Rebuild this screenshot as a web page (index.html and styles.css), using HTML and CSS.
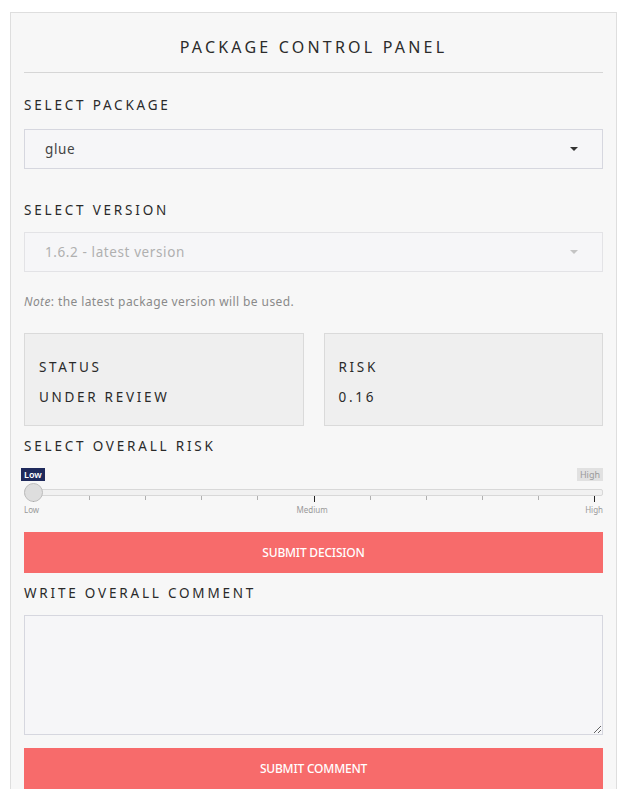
FILE: index.html
```html
<!DOCTYPE html>
<html>
<head>
<meta charset="utf-8">
<link rel="stylesheet" href="styles.css">
</head>
<body>
<div class="panel">
  <h1 class="title">PACKAGE CONTROL PANEL</h1>

  <div class="label first">SELECT PACKAGE</div>
  <div class="select">
    <span>glue</span>
    <span class="caret"></span>
  </div>

  <div class="label version">SELECT VERSION</div>
  <div class="select disabled">
    <span>1.6.2 - latest version</span>
    <span class="caret"></span>
  </div>

  <p class="note"><em>Note</em>: the latest package version will be used.</p>

  <div class="cards">
    <div class="card">
      <div class="card-line">STATUS</div>
      <div class="card-line">UNDER REVIEW</div>
    </div>
    <div class="card">
      <div class="card-line">RISK</div>
      <div class="card-line">0.16</div>
    </div>
  </div>

  <div class="label risk">SELECT OVERALL RISK</div>
  <div class="slider">
    <div class="slider-bubbles">
      <span class="bubble current">Low</span>
      <span class="bubble max">High</span>
    </div>
    <div class="track"></div>
    <div class="ticks">
      <span class="tick major" style="left: calc(9px + 0 * 56.1px)"></span>
      <span class="tick" style="left: calc(9px + 1 * 56.1px)"></span>
      <span class="tick" style="left: calc(9px + 2 * 56.1px)"></span>
      <span class="tick" style="left: calc(9px + 3 * 56.1px)"></span>
      <span class="tick" style="left: calc(9px + 4 * 56.1px)"></span>
      <span class="tick major" style="left: calc(9px + 5 * 56.1px)"></span>
      <span class="tick" style="left: calc(9px + 6 * 56.1px)"></span>
      <span class="tick" style="left: calc(9px + 7 * 56.1px)"></span>
      <span class="tick" style="left: calc(9px + 8 * 56.1px)"></span>
      <span class="tick" style="left: calc(9px + 9 * 56.1px)"></span>
      <span class="tick major" style="left: calc(9px + 10 * 56.1px)"></span>
    </div>
    <span class="thumb"></span>
    <div class="scale">
      <span>Low</span>
      <span>Medium</span>
      <span>High</span>
    </div>
  </div>

  <button class="btn decision">SUBMIT DECISION</button>

  <div class="label comment">WRITE OVERALL COMMENT</div>
  <textarea class="comment-box"></textarea>

  <button class="btn submit-comment">SUBMIT COMMENT</button>
</div>
</body>
</html>
```

FILE: styles.css
```css
html, body {
  margin: 0;
  padding: 0;
  background: #ffffff;
}
body {
  padding: 12px 0 0 10px;
  font-family: "Noto Sans", "Open Sans", sans-serif;
  color: #2b2b2b;
  overflow: hidden;
}
.panel {
  width: 579px;
  padding: 0 13px 40px;
  background: #f7f7f7;
  border: 1px solid #dedede;
  border-bottom: none;
}
.title {
  margin: 0;
  padding: 23px 0 14px;
  font-size: 16px;
  line-height: 22px;
  font-weight: 400;
  letter-spacing: 3.2px;
  text-align: center;
  border-bottom: 1px solid #d6d6d6;
}
.label {
  font-size: 13.5px;
  line-height: 20px;
  letter-spacing: 2.8px;
  color: #2a2a2a;
}
.label.first { margin-top: 22px; }
.label.version { margin-top: 31px; }
.label.risk { margin-top: 10px; }
.label.comment { margin-top: 10px; }

.select {
  margin-top: 14px;
  height: 38px;
  border: 1px solid #d6d7df;
  background: #f6f6f8;
  display: flex;
  align-items: center;
  justify-content: space-between;
  padding: 0 24px 0 20px;
  font-size: 13.5px;
  letter-spacing: 0.6px;
  color: #444;
}
.label.version + .select { margin-top: 12px; }
.select.disabled {
  border-color: #e3e3e6;
  color: #b0b0b0;
}
.caret {
  width: 0;
  height: 0;
  border-left: 4.5px solid transparent;
  border-right: 4.5px solid transparent;
  border-top: 4.5px solid #333;
}
.select.disabled .caret { border-top-color: #c4c4c4; }

.note {
  margin: 22px 0 0;
  font-size: 12px;
  line-height: 16px;
  letter-spacing: 0.4px;
  color: #8a8a8a;
}

.cards {
  margin-top: 23px;
  display: grid;
  grid-template-columns: 1fr 1fr;
  gap: 20px;
}
.card {
  background: #efefef;
  border: 1px solid #dadada;
  padding: 23px 14px 0;
  box-sizing: border-box;
  height: 93px;
  display: flex;
  flex-direction: column;
  gap: 10px;
}
.card-line {
  font-size: 13.5px;
  line-height: 20px;
  letter-spacing: 2.7px;
  color: #2a2a2a;
}

.slider {
  position: relative;
  margin-top: 12px;
  height: 47px;
}
.slider-bubbles {
  display: flex;
  justify-content: space-between;
  height: 13px;
}
.bubble {
  font-size: 9px;
  line-height: 13px;
  padding: 0 3px;
  font-weight: 600;
}
.bubble.current {
  margin-left: -3px;
  background: #1f2a5c;
  color: #fff;
}
.bubble.max {
  background: #e1e1e1;
  color: #9a9a9a;
  font-weight: 400;
}
.track {
  margin-top: 8px;
  height: 5px;
  border: 1px solid #d8d8d8;
  background: #f1f1f1;
  border-radius: 2px;
}
.ticks {
  position: relative;
  height: 9px;
}
.tick {
  position: absolute;
  top: 0;
  width: 1px;
  height: 4px;
  background: #b0b0b0;
}
.tick.major {
  height: 6px;
  background: #222;
}
.thumb {
  position: absolute;
  left: 0;
  top: 15px;
  width: 17px;
  height: 17px;
  border-radius: 50%;
  background: #dedede;
  border: 1px solid #bdbdbd;
}
.scale {
  display: flex;
  justify-content: space-between;
  font-size: 8px;
  line-height: 10px;
  color: #999;
}

.btn {
  display: block;
  width: 100%;
  height: 41px;
  border: none;
  background: #f76b6b;
  color: #fff;
  font-family: "Noto Sans", sans-serif;
  font-size: 12px;
  font-weight: 500;
  letter-spacing: -0.2px;
  padding: 0;
}
.btn.decision { margin-top: 17px; }
.btn.submit-comment { margin-top: 13px; }

.comment-box {
  display: block;
  margin-top: 12px;
  width: 100%;
  height: 120px;
  box-sizing: border-box;
  border: 1px solid #d6d7df;
  background: #f6f6f8;
  resize: vertical;
  font-family: "Noto Sans", sans-serif;
}
```
